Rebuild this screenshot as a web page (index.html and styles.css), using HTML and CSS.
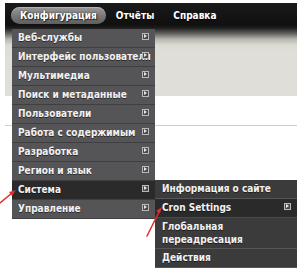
FILE: index.html
```html
<!DOCTYPE html>
<html lang="ru">
<head>
<meta charset="utf-8">
<link rel="stylesheet" href="styles.css">
</head>
<body>
<div class="page">
  <header class="header">
    <nav class="topnav">
      <span class="topitem active">Конфигурация</span>
      <span class="topitem">Отчёты</span>
      <span class="topitem">Справка</span>
    </nav>
  </header>
  <div class="rule"></div>

  <ul class="menu main">
    <li class="item">Веб-службы<i class="sub"></i></li>
    <li class="item">Интерфейс пользователя<i class="sub"></i></li>
    <li class="item">Мультимедиа<i class="sub"></i></li>
    <li class="item">Поиск и метаданные<i class="sub"></i></li>
    <li class="item">Пользователи<i class="sub"></i></li>
    <li class="item">Работа с содержимым<i class="sub"></i></li>
    <li class="item">Разработка<i class="sub"></i></li>
    <li class="item">Регион и язык<i class="sub"></i></li>
    <li class="item hover">Система<i class="sub"></i></li>
    <li class="item">Управление<i class="sub"></i></li>
  </ul>

  <ul class="menu second">
    <li class="item">Информация о сайте</li>
    <li class="item hover">Cron Settings<i class="sub"></i></li>
    <li class="item multi">Глобальная переадресация</li>
    <li class="item">Действия</li>
  </ul>

  <svg class="arrows" width="300" height="273" viewBox="0 0 300 273">
    <g stroke="#e0302a" stroke-width="1.6" fill="#e0302a" stroke-linecap="round">
      <line x1="0" y1="203" x2="12" y2="193"/>
      <polygon points="16,190 9,192 12,196" stroke="none"/>
      <line x1="147" y1="236" x2="159" y2="212"/>
      <polygon points="162,207 156,211 160,213" stroke="none"/>
    </g>
  </svg>
</div>
</body>
</html>
```

FILE: styles.css
```css
html, body {
  margin: 0;
  padding: 0;
  background: #ffffff;
}

.page {
  position: relative;
  width: 300px;
  height: 273px;
  overflow: hidden;
  font-family: "DejaVu Sans Condensed", "DejaVu Sans", sans-serif;
  font-weight: bold;
  font-size: 10px;
}

.header {
  margin: 3px 0 0 5px;
  width: 292px;
  height: 93px;
  background: linear-gradient(to bottom, #1a1a1a 0, #101010 22px, #1e1e1e 25px, #5a5a58 30px, #b4b3ad 36px, #dad9d2 42px, #dfded8 48px, #dfded8 100%);
  padding: 4px 0 0 6px;
  box-sizing: border-box;
}

.topnav {
  display: flex;
  gap: 1px;
  height: 17px;
}

.topitem {
  display: block;
  padding: 0 9px;
  height: 17px;
  line-height: 17px;
  color: #ffffff;
  text-shadow: 0 1px 1px #000;
}

.topitem.active {
  border-radius: 9px;
  background: linear-gradient(to bottom, #9a9a9a 0, #7a7a7a 50%, #5e5e5e 100%);
  box-shadow: inset 0 1px 0 rgba(255,255,255,0.25);
  text-shadow: 0 0 2px #333, 1px 1px 1px #222;
}

.rule {
  margin: 29px 0 0 5px;
  width: 292px;
  height: 1px;
  background: #cfcfcf;
}

.menu {
  position: absolute;
  list-style: none;
  margin: 0;
  padding: 0;
}

.menu .item {
  position: relative;
  color: #f2f2f2;
  line-height: 18px;
  height: 18px;
  white-space: nowrap;
  text-shadow: 0 1px 0 rgba(0,0,0,0.5);
}

.main {
  left: 12px;
  top: 29px;
  width: 143px;
  background: #545355;
}

.main .item {
  padding-left: 6px;
  border-bottom: 1px solid #3f3e40;
  background: #555456;
}

.main .item.hover {
  background: #2b2a2b;
}

.second {
  left: 155px;
  top: 180px;
  width: 142px;
  background: #3b3a3b;
}

.second .item {
  padding-left: 7px;
  border-bottom: 1px solid #565557;
  background: #3c3b3c;
}

.second .item.hover {
  background: #2b2a2b;
  border-bottom-color: #4a494a;
}

.second .item.multi {
  height: auto;
  white-space: normal;
  line-height: 13px;
  padding-top: 2px;
  padding-bottom: 2px;
  padding-right: 50px;
}

.sub {
  position: absolute;
  right: 6px;
  top: 4px;
  width: 5px;
  height: 5px;
  border: 1px solid #b8b8b8;
  background: #4a494b;
}

.sub::after {
  content: "";
  position: absolute;
  left: 1px;
  top: 0px;
  width: 0;
  height: 0;
  border-left: 3px solid #e6e6e6;
  border-top: 2.5px solid transparent;
  border-bottom: 2.5px solid transparent;
}

.arrows {
  position: absolute;
  left: 0;
  top: 0;
  pointer-events: none;
}
```
